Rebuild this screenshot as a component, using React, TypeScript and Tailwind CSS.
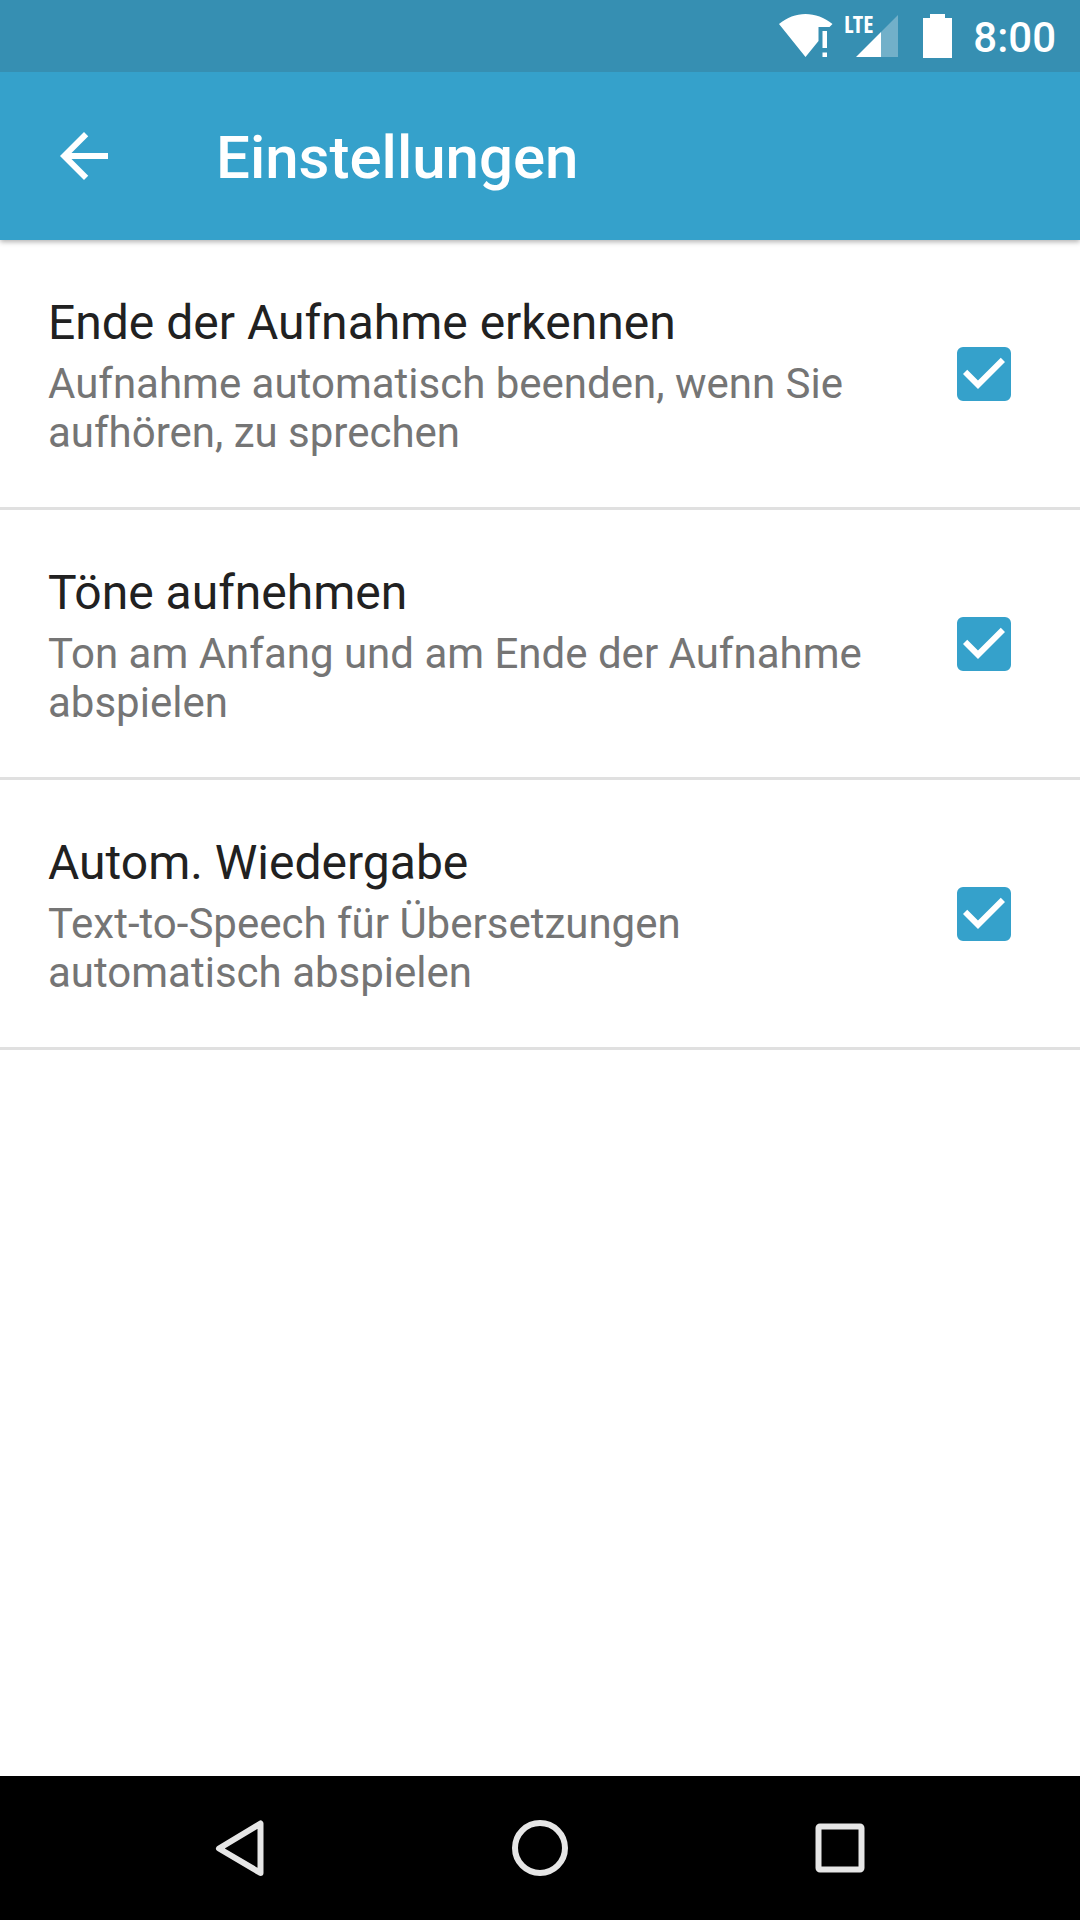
import { useId, useState } from "react";

const settings = [
  {
    title: "Ende der Aufnahme erkennen",
    summary: "Aufnahme automatisch beenden, wenn Sie aufhören, zu sprechen",
  },
  {
    title: "Töne aufnehmen",
    summary: "Ton am Anfang und am Ende der Aufnahme abspielen",
  },
  {
    title: "Autom. Wiedergabe",
    summary: "Text-to-Speech für Übersetzungen automatisch abspielen",
  },
];

function WifiIcon() {
  return (
    <svg className="h-11 w-[54px]" viewBox="0 0 54 44" fill="currentColor" aria-hidden="true">
      <path d="M0 10C8 3.500 17 0 26.500 0S45.500 3.500 53.500 10L50.500 13H39.500V27L26.500 43Z" />
      <path d="M43.500 17h4.500v17h-4.500zM43.500 38.500h4.500V43h-4.500z" />
    </svg>
  );
}

function SignalIcon() {
  return (
    <svg className="h-[72px] w-[56px] overflow-visible" viewBox="-2 -14 56 72" fill="currentColor" role="img" aria-label="LTE">
      <path d="M53 1v42H36V18Z" opacity="0.3" />
      <path d="M11 43L36 18V43Z" />
      <text
        x="-1"
        y="19"
        fontSize="24"
        fontWeight="700"
        fontFamily="'Open Sans Condensed', 'Roboto Condensed', 'Liberation Sans Narrow', Roboto, sans-serif"
      >
        LTE
      </text>
    </svg>
  );
}

function BatteryIcon() {
  return (
    <svg className="h-11 w-[29px]" viewBox="0 0 29 44" fill="currentColor" aria-hidden="true">
      <path d="M7 0h15v4h7v40H0V4h7z" />
    </svg>
  );
}

function SettingRow({ title, summary }: { title: string; summary: string }) {
  const id = useId();
  const [checked, setChecked] = useState(true);
  return (
    <li className="border-b-3 border-[#e0e0e0]">
      <label
        htmlFor={id}
        className="flex items-center gap-20 pr-[69px] pl-12"
      >
        <span className="flex flex-1 flex-col gap-2 pt-[55px] pb-[50px]">
          <span className="text-[48px] leading-[56px] text-[#212121]">{title}</span>
          <span className="text-[42px] leading-[49px] text-[#757575]">{summary}</span>
        </span>
        <span className="grid size-[54px] shrink-0">
          <input
            id={id}
            type="checkbox"
            checked={checked}
            onChange={() => setChecked(!checked)}
            className="peer col-start-1 row-start-1 size-[54px] appearance-none rounded-md border-6 border-[#757575] checked:border-[#35a1cb] checked:bg-[#35a1cb]"
          />
          <svg
            className="pointer-events-none col-start-1 row-start-1 size-[54px] fill-white opacity-0 peer-checked:opacity-100"
            viewBox="3 3 18 18"
            aria-hidden="true"
          >
            <path d="M10 17l-5-5 1.410-1.410L10 14.170l7.590-7.590L19 8z" />
          </svg>
        </span>
      </label>
    </li>
  );
}

export default function App() {
  return (
    <div className="flex min-h-screen flex-col bg-white font-[Roboto,sans-serif]">
      <div className="z-20 flex h-[72px] items-center justify-end bg-[#368fb2] pr-6 text-white">
        <WifiIcon />
        <div className="ml-2.5">
          <SignalIcon />
        </div>
        <div className="ml-6">
          <BatteryIcon />
        </div>
        <time className="ml-[21px] pt-0.5 text-[42px] leading-[49px] font-medium">8:00</time>
      </div>

      <header className="z-10 flex h-[168px] items-center bg-[#35a1cb] px-12 text-white shadow-[0_2px_5px_rgba(0,0,0,0.3)]">
        <button type="button" aria-label="Zurück" className="mr-24 shrink-0">
          <svg className="size-[72px]" viewBox="0 0 24 24" fill="currentColor" aria-hidden="true">
            <path d="M20 11H7.830l5.590-5.590L12 4l-8 8 8 8 1.410-1.410L7.830 13H20z" />
          </svg>
        </button>
        <h1 className="pt-1 text-[60px] leading-[72px] font-medium">Einstellungen</h1>
      </header>

      <main className="flex-1">
        <ul>
          {settings.map((s) => (
            <SettingRow key={s.title} title={s.title} summary={s.summary} />
          ))}
        </ul>
      </main>

      <nav className="grid h-36 grid-cols-3 bg-black px-[90px] text-[#e6e6e6]">
        <button type="button" aria-label="Zurück" className="flex items-center justify-center">
          <svg className="size-[60px]" viewBox="0 0 60 60" fill="none" stroke="currentColor" strokeWidth="6" strokeLinejoin="round" aria-hidden="true">
            <path d="M9 30.500L50.500 5.500V55Z" />
          </svg>
        </button>
        <button type="button" aria-label="Startbildschirm" className="flex items-center justify-center">
          <svg className="size-[60px]" viewBox="0 0 60 60" fill="none" stroke="currentColor" strokeWidth="6" aria-hidden="true">
            <circle cx="30" cy="30" r="25" />
          </svg>
        </button>
        <button type="button" aria-label="Letzte Apps" className="flex items-center justify-center">
          <svg className="size-[60px]" viewBox="0 0 60 60" fill="none" stroke="currentColor" strokeWidth="6" aria-hidden="true">
            <rect x="8.500" y="8.500" width="43" height="43" rx="1.500" />
          </svg>
        </button>
      </nav>
    </div>
  );
}
